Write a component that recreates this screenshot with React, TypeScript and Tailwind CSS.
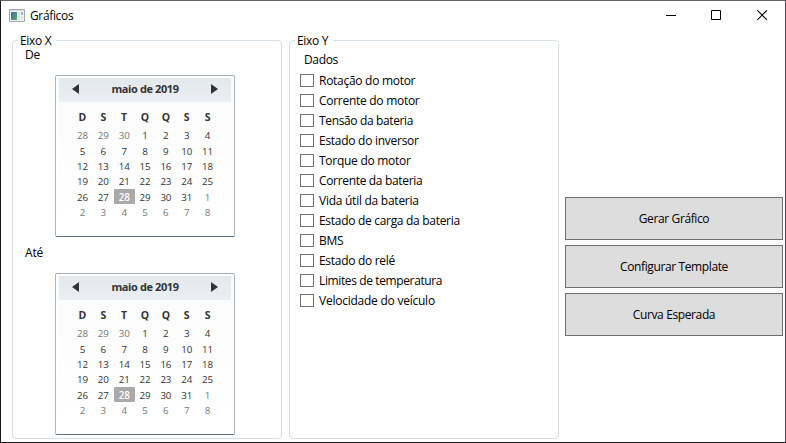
import React from "react";

const weekdays = ["D", "S", "T", "Q", "Q", "S", "S"];

const weeks = [
  [28, 29, 30, 1, 2, 3, 4],
  [5, 6, 7, 8, 9, 10, 11],
  [12, 13, 14, 15, 16, 17, 18],
  [19, 20, 21, 22, 23, 24, 25],
  [26, 27, 28, 29, 30, 31, 1],
  [2, 3, 4, 5, 6, 7, 8],
];

const options = [
  { label: "Rotação do motor", tracking: "tracking-[-0.28px]" },
  { label: "Corrente do motor", tracking: "tracking-[-0.28px]" },
  { label: "Tensão da bateria", tracking: "tracking-[-0.36px]" },
  { label: "Estado do inversor", tracking: "tracking-[-0.27px]" },
  { label: "Torque do motor", tracking: "tracking-[-0.27px]" },
  { label: "Corrente da bateria", tracking: "tracking-[-0.33px]" },
  { label: "Vida útil da bateria", tracking: "tracking-[-0.26px]" },
  { label: "Estado de carga da bateria", tracking: "tracking-[-0.3px]" },
  { label: "BMS", tracking: "tracking-[-0.3px]" },
  { label: "Estado do relé", tracking: "tracking-[-0.3px]" },
  { label: "Limites de temperatura", tracking: "tracking-[-0.38px]" },
  { label: "Velocidade do veículo", tracking: "tracking-[-0.24px]" },
];

function isOutside(row: number, day: number) {
  return (row === 0 && day > 20) || (row === 4 && day < 10) || row === 5;
}

function Calendar() {
  return (
    <div className="ml-[42px] h-[162px] w-[180px] rounded-[2px] border border-t-[#a3aeb9] border-x-[#a9b4bf] border-b-[#5c7080] bg-linear-to-b from-[#fafbfb] via-[#fdfdfd] to-white px-[3px] pt-[2px] text-[#333333] shadow-[inset_0_0_0_2px_#ffffff]">
      <div className="flex h-6 items-center justify-between bg-linear-to-b from-[#e3e8ed] to-[#ebeff4] pr-[13px] pl-[13px]">
        <svg width="7" height="10" viewBox="0 0 7 10" className="-mt-[3px]">
          <path d="M7 0v10L0 5z" fill="#333" />
        </svg>
        <span className="-mt-[2px] text-[11px] leading-4 font-bold tracking-[-0.4px] whitespace-nowrap">maio de 2019</span>
        <svg width="7" height="10" viewBox="0 0 7 10" className="-mt-[3px]">
          <path d="M0 0v10l7-5z" fill="#333" />
        </svg>
      </div>
      <div className="mx-[13px] mt-[7px] grid grid-cols-7 text-center text-[10.5px] leading-4 font-bold">
        {weekdays.map((d, i) => (
          <span key={i}>{d}</span>
        ))}
      </div>
      <div className="mx-[13px] mt-[3px] grid grid-cols-7 grid-rows-[16px_15px_15px_16px_15px_15px] text-center text-[9.75px] leading-[15px] tracking-[-0.1px]">
        {weeks.map((week, r) =>
          week.map((day, c) => {
            const selected = r === 4 && c === 2;
            return (
              <span
                key={`${r}-${c}`}
                className={
                  selected
                    ? "-mt-px h-[15px] rounded-[1px] bg-[#a9a9a9] pt-px font-semibold text-white"
                    : isOutside(r, day)
                      ? "text-[#777777]"
                      : "text-[#333333]"
                }
              >
                {day}
              </span>
            );
          }),
        )}
      </div>
    </div>
  );
}

function GroupBox({ title, children }: { title: string; children: React.ReactNode }) {
  return (
    <section className="h-[399px] w-[270px] rounded-[4px] border border-[#d5dfe5]">
      <h2 className="-mt-[7px] ml-[5px] w-[38px] bg-white pl-[2px] text-[12px] leading-[14px] tracking-[-0.3px] whitespace-nowrap">{title}</h2>
      {children}
    </section>
  );
}

function ActionButton({ children }: { children: React.ReactNode }) {
  return (
    <button className="flex h-[43px] w-full items-center justify-center border border-[#707070] bg-[#dddddd] text-[12px] tracking-[-0.38px]">
      {children}
    </button>
  );
}

export default function App() {
  return (
    <div className="flex h-[443px] w-[786px] flex-col overflow-hidden border border-t-[#656365] border-r-[#4b494b] border-b-[#191719] border-l-[#191719] bg-white font-['Open_Sans','Noto_Sans',sans-serif] text-black">
      <header className="flex h-[30px] shrink-0 items-center pr-[17px] pl-2">
        <svg width="16" height="14" viewBox="0 0 16 14" className="-mt-px">
          <defs>
            <linearGradient id="pane" x1="0" y1="0" x2="1" y2="1">
              <stop offset="0" stopColor="#3f6fa5" />
              <stop offset="1" stopColor="#58a968" />
            </linearGradient>
          </defs>
          <path d="M.5 .5h15v12H.5z" fill="#f0f2f4" stroke="#a3a7ab" />
          <path d="M1 1h14v1H1z" fill="#d5d9dc" />
          <path d="M2 3h6v8H2z" fill="url(#pane)" />
          <path d="M9 3h2v8H9z" fill="#dfe3e7" />
          <path d="M12 3h2v3h-2z" fill="#94b9c5" />
          <path d="M12 7h2v4h-2z" fill="#dce3e5" />
        </svg>
        <h1 className="ml-[5px] text-[12px] leading-4 tracking-[-0.35px]">Gráficos</h1>
        <div className="-mt-px ml-auto flex items-center gap-[35px]">
          <svg width="11" height="11" viewBox="0 0 11 11" shapeRendering="crispEdges">
            <path d="M1 5h10v1H1z" />
          </svg>
          <svg width="11" height="11" viewBox="0 0 11 11" fill="none" stroke="#000">
            <path d="M.5 .5h9v9h-9z" />
          </svg>
          <svg width="11" height="11" viewBox="0 0 11 11" fill="none" stroke="#000" strokeWidth="1.1">
            <path d="M.3 .3l9.6 9.6M9.9 .3l-9.6 9.6" />
          </svg>
        </div>
      </header>

      <main className="flex pt-[9px] pl-[11px]">
        <GroupBox title="Eixo X">
          <p className="ml-3 text-[12px] leading-[14px] tracking-[-0.1px]">De</p>
          <div className="mt-[13px]">
            <Calendar />
          </div>
          <p className="mt-[8px] ml-3 text-[12px] leading-4 tracking-[-0.2px]">Até</p>
          <div className="mt-[12px]">
            <Calendar />
          </div>
        </GroupBox>

        <div className="ml-[7px]">
          <GroupBox title="Eixo Y">
            <p className="mt-[4px] ml-[14px] text-[12px] leading-4 tracking-[-0.35px]">Dados</p>
            <div className="mt-[3px] ml-[10px] flex flex-col">
              {options.map((o) => (
                <label key={o.label} className="flex h-5 items-center">
                  <span className="-mt-px h-[13px] w-[14px] border border-[#707070] bg-white" />
                  <span className={`ml-[5px] text-[12px] leading-5 whitespace-nowrap ${o.tracking}`}>{o.label}</span>
                </label>
              ))}
            </div>
          </GroupBox>
        </div>

        <div className="mt-[157px] ml-[6px] flex w-[218px] flex-col gap-[5px]">
          <ActionButton>Gerar Gráfico</ActionButton>
          <ActionButton>Configurar Template</ActionButton>
          <ActionButton>Curva Esperada</ActionButton>
        </div>
      </main>
    </div>
  );
}
